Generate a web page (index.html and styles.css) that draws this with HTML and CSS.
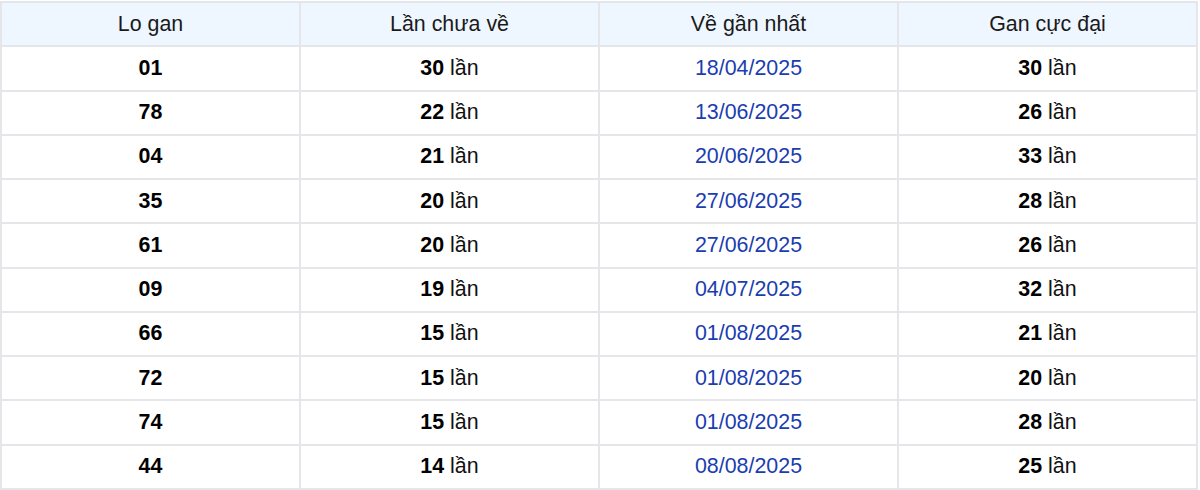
FILE: index.html
```html
<!DOCTYPE html>
<html lang="vi">
<head>
<meta charset="utf-8">
<title>Lo gan</title>
<link rel="stylesheet" href="styles.css">
</head>
<body>
<table class="gan">
  <thead>
    <tr><th>Lo gan</th><th>Lần chưa về</th><th>Về gần nhất</th><th>Gan cực đại</th></tr>
  </thead>
  <tbody>
    <tr><td><b>01</b></td><td><b>30</b> lần</td><td class="date">18/04/2025</td><td><b>30</b> lần</td></tr>
    <tr><td><b>78</b></td><td><b>22</b> lần</td><td class="date">13/06/2025</td><td><b>26</b> lần</td></tr>
    <tr><td><b>04</b></td><td><b>21</b> lần</td><td class="date">20/06/2025</td><td><b>33</b> lần</td></tr>
    <tr><td><b>35</b></td><td><b>20</b> lần</td><td class="date">27/06/2025</td><td><b>28</b> lần</td></tr>
    <tr><td><b>61</b></td><td><b>20</b> lần</td><td class="date">27/06/2025</td><td><b>26</b> lần</td></tr>
    <tr><td><b>09</b></td><td><b>19</b> lần</td><td class="date">04/07/2025</td><td><b>32</b> lần</td></tr>
    <tr><td><b>66</b></td><td><b>15</b> lần</td><td class="date">01/08/2025</td><td><b>21</b> lần</td></tr>
    <tr><td><b>72</b></td><td><b>15</b> lần</td><td class="date">01/08/2025</td><td><b>20</b> lần</td></tr>
    <tr><td><b>74</b></td><td><b>15</b> lần</td><td class="date">01/08/2025</td><td><b>28</b> lần</td></tr>
    <tr><td><b>44</b></td><td><b>14</b> lần</td><td class="date">08/08/2025</td><td><b>25</b> lần</td></tr>
  </tbody>
</table>
</body>
</html>
```
FILE: styles.css
```css
html, body {
  margin: 0;
  padding: 0;
  background: #fff;
}
body {
  padding: 1px 2px 0 0;
  font-family: "Liberation Sans", Arial, sans-serif;
  font-size: 21.4px;
  color: #111;
}
.gan {
  width: 1198px;
  border-collapse: collapse;
  table-layout: fixed;
}
.gan th, .gan td {
  border: 2px solid #e4e6e9;
  height: 42.25px;
  padding: 0;
  text-align: center;
  vertical-align: middle;
}
.gan th {
  background: #eef6ff;
  font-weight: normal;
  color: #1a1a1a;
}
.gan b {
  font-weight: bold;
  color: #000;
}
.gan td.date {
  color: #1a3db0;
}
```
